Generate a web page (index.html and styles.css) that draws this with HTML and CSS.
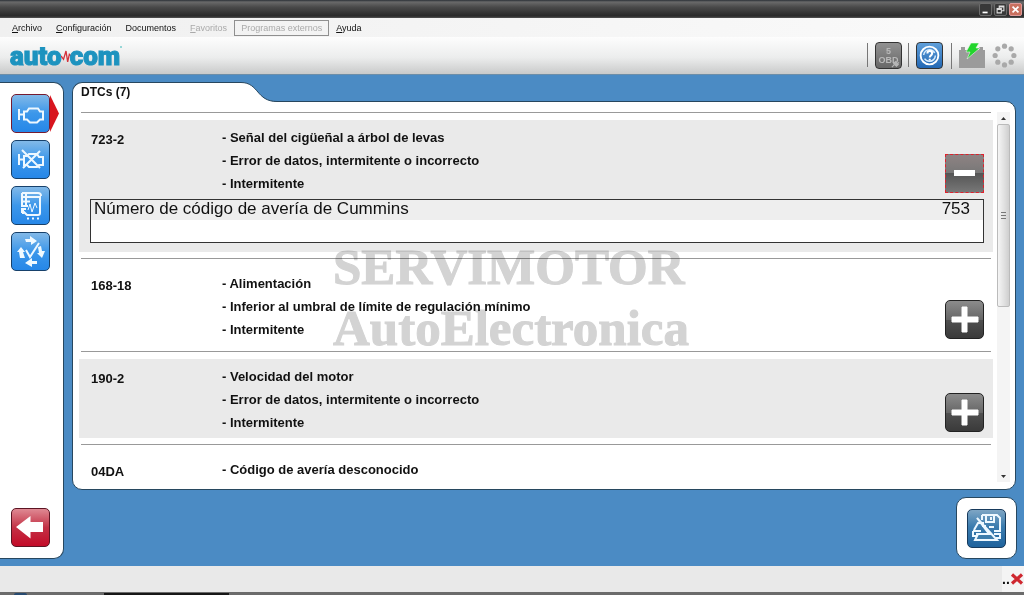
FILE: index.html
```html
<!DOCTYPE html>
<html lang="es">
<head>
<meta charset="utf-8">
<title>Autocom</title>
<link rel="stylesheet" href="styles.css">
</head>
<body>
<header class="titlebar">
  <button class="win-btn" aria-label="Minimizar"><svg viewBox="0 0 13 13"><path d="M3 9h6v2H3z" fill="#fff"/></svg></button>
  <button class="win-btn" aria-label="Restaurar"><svg viewBox="0 0 13 13"><path d="M5 5V2.500h5.500V8H8M5 3.500h5.500" fill="none" stroke="#ddd" stroke-width="1.300"/><path d="M2.500 5.500h5v5h-5zM2.500 6.500h5" fill="#333" stroke="#ddd" stroke-width="1.300"/></svg></button>
  <button class="win-btn win-close" aria-label="Cerrar"><svg viewBox="0 0 13 13"><path d="M3 3l7 7M10 3l-7 7" stroke="#fff" stroke-width="2"/></svg></button>
</header>

<nav class="menubar">
  <button class="menu-item"><u>A</u>rchivo</button>
  <button class="menu-item"><u>C</u>onfiguración</button>
  <button class="menu-item">Documentos</button>
  <button class="menu-item" disabled><u>F</u>avoritos</button>
  <button class="menu-item menu-boxed" disabled>Programas externos</button>
  <button class="menu-item"><u>A</u>yuda</button>
</nav>

<div class="toolbar">
  <div class="logo"><span>auto</span><svg class="logo-pulse" viewBox="0 0 12 18"><path d="M0 9l3 4 3-10 2 13 2-9 2 2" fill="none" stroke="#d4323c" stroke-width="1.600"/></svg><span>com</span><span class="logo-mark"></span></div>
  <div class="tools">
    <button class="tool tool-obd" aria-label="OBD"><span>5</span><span>OBD</span><svg class="obd-plug" viewBox="0 0 10 10"><path d="M1 9l3-3M3 5l3 3 2-2-3-3zM7 5l2-1" fill="#b5b5b5" stroke="#b5b5b5" stroke-width="1.300"/></svg></button>
    <button class="tool tool-help" aria-label="Ayuda"><svg viewBox="0 0 24 24"><circle cx="12" cy="12" r="8.500" fill="none" stroke="#fff" stroke-width="1.800"/><circle cx="12" cy="12" r="5.600" fill="none" stroke="#d8edff" stroke-width="1.400" stroke-dasharray="14 3.600"/><path d="M10 10c0-3 4.500-3 4.500 0 0 2-2.300 1.800-2.300 4M12.200 15.200v1.600" fill="none" stroke="#fff" stroke-width="1.900"/></svg></button>
    <svg class="battery" viewBox="0 0 26 26" role="img" aria-label="Batería"><path d="M0 7h2V4h4v3h14V4h4v3h2v18H0z" fill="#9b9b9b"/><path d="M12 0h8l-3 5h4L8 16l3-7H7z" fill="#22d52c" stroke="#e8f5e8" stroke-width=".6"/></svg>
    <svg class="spinner" viewBox="0 0 24 24" role="img" aria-label="Estado" fill="#a9a9a9"><circle cx="12" cy="3" r="2.500"/><circle cx="18.400" cy="5.600" r="2.500"/><circle cx="21" cy="12" r="2.500"/><circle cx="18.400" cy="18.400" r="2.500"/><circle cx="12" cy="21" r="2.500"/><circle cx="5.600" cy="18.400" r="2.500"/><circle cx="3" cy="12" r="2.500"/><circle cx="5.600" cy="5.600" r="2.500"/></svg>
  </div>
</div>

<div class="workspace">
  <aside class="sidebar">
    <button class="side-btn is-active" aria-label="Leer averías"><svg viewBox="0 0 37 37"><path d="M7 14v11M7 19.500h5M12 16.500h3l2-3h9l2 3h3v8h-3l-3 3h-7l-3-3h-3z" class="stroke"/></svg></button>
    <button class="side-btn" aria-label="Borrar averías"><svg viewBox="0 0 37 37"><path d="M7 13v11M7 18.500h4M12 15h3l2-2h8l2 3h4v8h-4l-2 2h-8l-2-2h-3z" class="stroke"/><path d="M10 9l18 18M28 10L11 27" class="stroke"/></svg></button>
    <button class="side-btn" aria-label="Datos en tiempo real"><svg viewBox="0 0 37 37"><path d="M10 6h16q3 0 3 3M10 6v14M10 10h19M10 14.500h8M10 19h6M14 6v13M28 9v17q0 2-2 2H15l-3-3h-2v-3h4M11 21v6" class="stroke"/><path d="M16 23l2-6 2 8 3-9 2 5" class="stroke thin"/><path d="M15 31.500h2M20 31.500h2M25 31.500h2" class="stroke"/></svg></button>
    <button class="side-btn" aria-label="Activaciones"><svg viewBox="0 0 37 37"><path d="M13 6h5V3l7 5-6 4V9h-5zM25 28h-5v-3l-7 5 7 4v-3h5zM5 19l4-5 4 5h-2l2 6H8l-1-6zM26 14l3-1 1 5h3l-3 7-5-5h2z" fill="#f1faff"/><path d="M14 17l4 7 9-14" class="stroke" stroke-width="3"/></svg></button>
    <button class="side-btn back-btn" aria-label="Volver"><svg viewBox="0 0 37 37"><path d="M4 18L18.500 7v6H31v10H18.500v6.500z" fill="#fff"/></svg></button>
  </aside>

  <main class="content">
    <div class="tab-row">
      <h1 class="tab">DTCs (7)</h1>
      <svg class="tab-shoulder" viewBox="0 0 36 21"><path d="M0 .5C18 .5 15 19.500 36 19.500V21H0z" fill="#fff"/><path d="M0 .5C18 .5 15 19.500 36 19.500" fill="none" stroke="#27475f"/></svg>
    </div>
    <section class="panel">
      <div class="list">
        <article class="entry shaded has-detail">
          <div class="row">
            <span class="code">723-2</span>
            <ul class="desc"><li>- Señal del cigüeñal a árbol de levas</li><li>- Error de datos, intermitente o incorrecto</li><li>- Intermitente</li></ul>
            <button class="toggle focused" aria-label="Contraer"><svg viewBox="0 0 37 37"><path d="M8 15h21v6H8z" fill="#fff"/></svg></button>
          </div>
          <table class="detail"><tr><td>Número de código de avería de Cummins</td><td class="value">753</td></tr></table>
        </article>
        <article class="entry">
          <div class="row">
            <span class="code">168-18</span>
            <ul class="desc"><li>- Alimentación</li><li>- Inferior al umbral de límite de regulación mínimo</li><li>- Intermitente</li></ul>
            <button class="toggle" aria-label="Expandir"><svg viewBox="0 0 37 37"><path d="M16 6h5v10h11v5H21v10h-5V21H6v-5h10z" class="plus"/></svg></button>
          </div>
        </article>
        <article class="entry shaded">
          <div class="row">
            <span class="code">190-2</span>
            <ul class="desc"><li>- Velocidad del motor</li><li>- Error de datos, intermitente o incorrecto</li><li>- Intermitente</li></ul>
            <button class="toggle" aria-label="Expandir"><svg viewBox="0 0 37 37"><path d="M16 6h5v10h11v5H21v10h-5V21H6v-5h10z" class="plus"/></svg></button>
          </div>
        </article>
        <article class="entry">
          <div class="row">
            <span class="code">04DA</span>
            <ul class="desc"><li>- Código de avería desconocido</li></ul>
          </div>
        </article>
      </div>
      <div class="scrollbar">
        <button class="scroll-btn" aria-label="Subir"><svg viewBox="0 0 12 12"><path d="M4 8h5L6.500 5z" fill="#333"/></svg></button>
        <div class="scroll-track"><div class="scroll-thumb"><span class="grip"></span></div></div>
        <button class="scroll-btn" aria-label="Bajar"><svg viewBox="0 0 12 12"><path d="M4 5h5L6.500 8z" fill="#333"/></svg></button>
      </div>
      <div class="watermark"><span>SERVIMOTOR</span><span>AutoElectronica</span></div>
    </section>
    <div class="actions">
      <button class="side-btn print-btn" aria-label="Guardar e imprimir"><svg viewBox="0 0 37 37"><g class="stroke"><path d="M14 5h15l3 3v13h-6M14 5v5M18 6v6h8V6M23 7v3M26 17h-5M6 20l4-7h6M14 16h4M5 21h8M5 21v5h4M8 24h8M26 24h6v4h-4"/><path d="M9 8l20 22H7l3-6h11z" fill="#3d7cab"/></g></svg></button>
    </div>
  </main>
</div>

<footer class="statusbar"><div class="status-end"><span>..</span><svg viewBox="0 0 14 12"><path d="M2 1.500l10 9M12 1.500l-10 9" stroke="#cf2830" stroke-width="3.200"/></svg></div></footer>
<div class="taskbar"><span class="task-orb"></span><span class="task-window"></span></div>
</body>
</html>
```
FILE: styles.css
```css
* { box-sizing: border-box; }
body {
  margin: 0;
  height: 100vh;
  display: flex;
  flex-direction: column;
  overflow: hidden;
  font-family: "Liberation Sans", Arial, sans-serif;
  color: #111;
  background: #4b8bc4;
}
button { margin: 0; padding: 0; border: 0; background: none; font: inherit; color: inherit; }
svg { display: block; }

.titlebar {
  flex: none;
  height: 18px;
  display: flex;
  justify-content: flex-end;
  align-items: center;
  gap: 2px;
  padding-right: 2px;
  background: linear-gradient(#2b3036 0, #6a6a6a 2px, #4a4a4a 7px, #292929 16px, #555 18px);
}
.win-btn { width: 13px; height: 13px; border: 1px solid #6b6b6b; border-radius: 2px; background: #383838; }
.win-close { background: #c9705f; border-color: #d99; }

.menubar { flex: none; height: 19px; display: flex; align-items: center; padding-left: 4px; background: linear-gradient(90deg, #f0f0f0, #fafafa); }
.menu-item { height: 16px; padding: 0 7px; font-size: 9px; white-space: nowrap; }
.menu-item:first-child { padding-left: 8px; }
.menu-item:disabled { color: #aaa; }
.menu-boxed { padding: 0 6px; border: 1px solid #8f8f8f; }

.toolbar {
  flex: none;
  height: 37px;
  display: flex;
  align-items: center;
  justify-content: space-between;
  padding: 0 7px 0 10px;
  background: linear-gradient(#fdfdfd, #eceded 55%, #c9caca);
}
.logo { display: flex; align-items: center; font: 900 26px/30px Roboto, sans-serif; color: #1d93bf; -webkit-text-stroke: 1px #1d93bf; }
.logo-pulse { width: 10px; height: 18px; margin: 0 -1px; }
.logo-mark { align-self: flex-start; width: 2px; height: 2px; margin-top: 5px; border-radius: 50%; background: #7cc; }
.tools { display: flex; align-items: center; }
.tool { position: relative; width: 27px; height: 27px; border: 1px solid #333; border-radius: 4px; }
.tool::before { content: ""; position: absolute; left: -9px; top: 0; width: 1px; height: 24px; background: #777; }
.tool-obd {
  display: flex;
  flex-direction: column;
  align-items: center;
  justify-content: center;
  margin-right: 14px;
  font-size: 9px;
  line-height: 9px;
  font-weight: bold;
  color: #b9b9b9;
  background: linear-gradient(#919191, #686868);
}
.obd-plug { position: absolute; right: 1px; bottom: 0; width: 9px; height: 9px; }
.tool-help { margin-right: 8px; background: linear-gradient(#5f9fda, #2368b4); }
.battery { width: 34px; height: 26px; padding-left: 7px; border-left: 1px solid #777; margin-right: 7px; }
.spinner { width: 25px; height: 25px; }

.workspace { flex: 1; min-height: 0; display: flex; gap: 8px; padding: 7px 8px 7px 0; border-top: 1px solid #6d8ea8; }
.sidebar {
  flex: none;
  width: 64px;
  display: flex;
  flex-direction: column;
  gap: 7px;
  padding: 11px 0 11px 11px;
  border: 1px solid #27475f;
  border-left: 0;
  border-radius: 0 10px 10px 0;
  background: #fff;
}
.side-btn { position: relative; width: 39px; height: 39px; border: 1px solid #17416b; border-radius: 5px; background: linear-gradient(#82b9e8, #3c97ea 50%, #2687e8); }
.stroke { fill: none; stroke: #eef8ff; stroke-width: 2; }
.thin { stroke-width: 1; }
.is-active { border-color: #761b30; }
.is-active::after { content: ""; position: absolute; left: 38px; top: 0; width: 9px; height: 37px; background: #d8151f; clip-path: polygon(0 0, 100% 50%, 0 100%); }
.back-btn { margin-top: auto; border-color: #5c1523; background: linear-gradient(#df8993, #c33145 50%, #c30b28); }

.content { flex: 1; min-width: 0; display: flex; flex-direction: column; }
.tab-row { position: relative; z-index: 1; height: 21px; display: flex; margin-bottom: -2px; }
.tab { width: 169px; margin: 0; padding: 0 0 0 8px; border: 1px solid #27475f; border-width: 1px 0 0 1px; border-radius: 10px 0 0 0; background: #fff; font-size: 12px; line-height: 18px; }
.tab-shoulder { width: 36px; height: 21px; }
.panel {
  position: relative;
  flex: 1;
  min-height: 0;
  display: flex;
  gap: 4px;
  padding: 10px 5px 7px 6px;
  border: 1px solid #27475f;
  border-radius: 0 10px 10px 10px;
  background: #fff;
}
.list { flex: 1; min-width: 0; overflow: hidden; }
.entry { padding: 8px 0 6px; background: linear-gradient(#999, #999) 2px 0 / calc(100% - 4px) 1px no-repeat; }
.row { display: flex; min-height: 79px; padding: 6px 9px 3px 12px; font-size: 13px; line-height: 23px; font-weight: bold; }
.shaded .row { background: #eaeaea; }
.code { width: 131px; padding-top: 2px; }
.desc { flex: 1; margin: 0; padding: 0; list-style: none; }
.toggle { align-self: flex-end; width: 39px; height: 39px; margin-bottom: 3px; border: 1px solid #222; border-radius: 5px; background: linear-gradient(#8c8c8c, #666 50%, #505050 50%, #3a3a3a); }
.plus { fill: #fff; stroke: #fff; stroke-width: 1; }
.focused { border: 1px dashed #e0202c; border-radius: 0; background: linear-gradient(#8e8383, #777 50%, #555 50%, #777); }
.has-detail {
  padding-bottom: 15px;
  background:
    linear-gradient(#999, #999) 2px 0 / calc(100% - 4px) 1px no-repeat,
    linear-gradient(#eaeaea, #eaeaea) 0 8px / 100% calc(100% - 14px) no-repeat;
}
.detail { width: calc(100% - 20px); height: 44px; margin: 0 9px 0 11px; border: 1px solid #333; border-spacing: 0; background: linear-gradient(#eee 20px, #fff 20px); font-size: 17px; line-height: 18px; }
.detail td { padding: 0 3px; vertical-align: top; }
.detail .value { padding-right: 13px; text-align: right; }

.scrollbar { width: 13px; display: flex; flex-direction: column; background: #f4f4f4; }
.scroll-btn { height: 12px; }
.scroll-btn svg { width: 12px; height: 12px; }
.scroll-track { flex: 1; }
.scroll-thumb { height: 53%; display: flex; align-items: center; justify-content: center; border: 1px solid #bbb; border-radius: 2px; background: linear-gradient(90deg, #f5f5f5, #e3e3e3 50%, #cfcfcf); }
.grip { width: 5px; height: 7px; background: repeating-linear-gradient(#777 0 1px, transparent 1px 3px); }

.watermark {
  position: absolute;
  left: 260px;
  top: 135px;
  display: flex;
  flex-direction: column;
  font: bold 51px/61px "Liberation Serif", serif;
  color: #d3d3d3;
  -webkit-text-stroke: 1px #d3d3d3;
  mix-blend-mode: multiply;
  pointer-events: none;
}
.actions { align-self: flex-end; width: 61px; height: 62px; display: flex; align-items: center; justify-content: center; margin: 7px -1px 0 0; border: 1px solid #27475f; border-radius: 10px; background: #fff; }
.print-btn { border-color: #173a5c; background: linear-gradient(#7fa6c4, #3b7caf 45%, #1f639d); }

.statusbar { flex: none; height: 26px; display: flex; justify-content: flex-end; background: #e9e9e9; }
.status-end { display: flex; align-items: center; width: 22px; background: #f4f4f4; font-size: 14px; font-weight: bold; }
.status-end svg { width: 14px; height: 12px; }
.taskbar { flex: none; height: 3px; display: flex; align-items: flex-end; padding-left: 14px; background: #6b6b6b; }
.task-orb { width: 13px; height: 2px; margin-right: 77px; border-radius: 6px 6px 0 0; background: #274a70; }
.task-window { width: 125px; height: 2px; background: #161616; }
```
